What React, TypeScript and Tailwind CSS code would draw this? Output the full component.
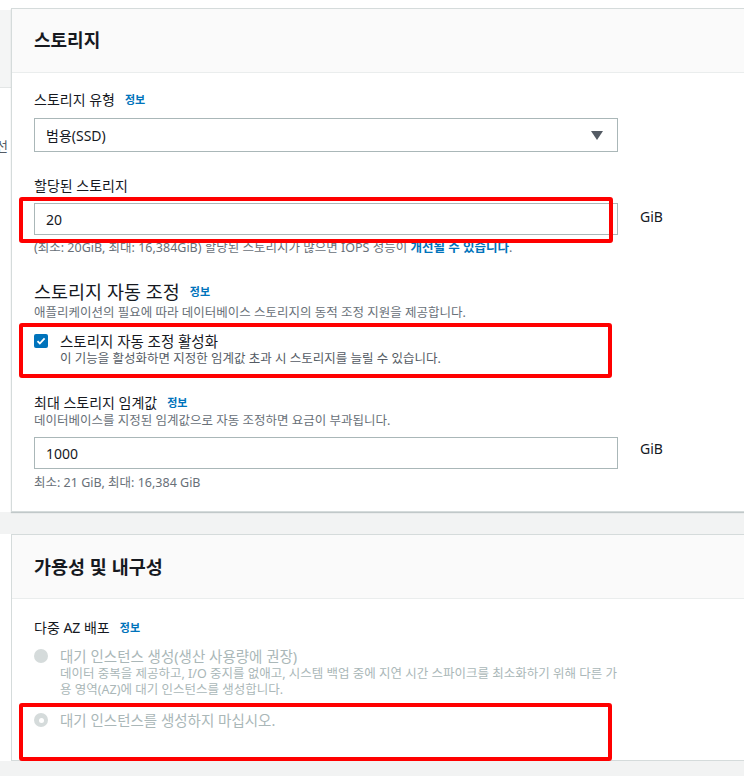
const font = 'font-["Noto_Sans","Noto_Sans_CJK_KR",sans-serif]';

function Info() {
  return <span className="ml-[10px] text-[11px] font-bold text-[#0073bb]">정보</span>;
}

function RedBox({ className }: { className: string }) {
  return <div className={`pointer-events-none absolute rounded-[3px] border-4 border-[#ff0000] ${className}`} />;
}

function LeftStrip({ withHeader }: { withHeader?: boolean }) {
  return (
    <div className="w-[11px] shrink-0 overflow-hidden bg-white">
      {withHeader && (
        <>
          <div className="mt-[2px] h-[78px] border-b border-[#e3e6e6] bg-[#f4f5f5]" />
          <div className="mt-[50px] flex h-[16px] justify-end overflow-hidden whitespace-nowrap text-[13px] leading-[16px] text-[#545b64]">
            <span className="mr-[3px]">선</span>
          </div>
        </>
      )}
    </div>
  );
}

export default function App() {
  return (
    <div className={`${font} h-[776px] w-[744px] overflow-hidden bg-[#f2f3f3] text-[#16191f]`}>
      <div className="h-[8px] bg-white" />
      <div className="flex">
        <LeftStrip withHeader />
        {/* Storage card */}
        <div className="flex-1 border-l border-t border-b border-[#d5dbdb] bg-white shadow-[0_1px_1px_rgba(0,28,36,0.2)]">
          <div className="flex h-[64px] items-center border-b border-[#eaeded] bg-[#fafafa] pl-[22px]">
            <h2 className="text-[18px] font-bold">스토리지</h2>
          </div>
          <div className="pb-[20px] pl-[22px] pt-[17px]">
            <div className="flex items-center text-[14px] leading-[20px]">
              스토리지 유형 <Info />
            </div>
            <div className="mt-[8px] flex h-[34px] w-[584px] items-center justify-between border border-[#aab7b8] bg-white pl-[11px] pr-[14px] text-[14px]">
              <span>범용(SSD)</span>
              <svg width="12" height="9" viewBox="0 0 12 9">
                <path d="M0 0h12L6 9z" fill="#545b64" />
              </svg>
            </div>

            <div className="mt-[24px] text-[14px] leading-[20px]">할당된 스토리지</div>
            <div className="mt-[7px] flex items-start">
              <div className="relative">
                <div className="flex h-[32px] w-[584px] items-center border border-[#aab7b8] pl-[11px] text-[14px]">20</div>
                <RedBox className="-left-[15px] -top-[6px] right-[5px] -bottom-[8px]" />
              </div>
              <span className="ml-[22px] pt-[3px] text-[14px]">GiB</span>
            </div>
            <p className="mt-[5px] text-[12.5px] leading-[16px] text-[#687078]">
              (최소: 20GiB, 최대: 16,384GiB) 할당된 스토리지가 많으면 IOPS 성능이{' '}
              <span className="font-bold text-[#0073bb]">개선될 수 있습니다</span>.
            </p>

            <div className="mt-[24px] flex items-center text-[18.5px] leading-[24px]">
              스토리지 자동 조정 <Info />
            </div>
            <p className="mt-[1px] text-[12.5px] leading-[16px] text-[#687078]">
              애플리케이션의 필요에 따라 데이터베이스 스토리지의 동적 조정 지원을 제공합니다.
            </p>
            <div className="relative mt-[10px] flex w-[584px] items-start">
              <div className="mt-[3px] flex h-[14px] w-[14px] items-center justify-center rounded-[2px] bg-[#0073bb]">
                <svg width="10" height="10" viewBox="0 0 10 10">
                  <path d="M1.5 5.2l2.3 2.3L8.6 2.3" fill="none" stroke="white" strokeWidth="1.8" />
                </svg>
              </div>
              <div className="ml-[12px]">
                <div className="text-[14.5px] leading-[20px]">스토리지 자동 조정 활성화</div>
                <div className="text-[12.5px] leading-[16px] text-[#545b64]">
                  이 기능을 활성화하면 지정한 임계값 초과 시 스토리지를 늘릴 수 있습니다.
                </div>
              </div>
              <RedBox className="-left-[15px] -top-[8px] right-[6px] -bottom-[11px]" />
            </div>

            <div className="mt-[26px] flex items-center text-[14px] leading-[20px]">
              최대 스토리지 임계값 <Info />
            </div>
            <p className="text-[12.5px] leading-[16px] text-[#687078]">
              데이터베이스를 지정된 임계값으로 자동 조정하면 요금이 부과됩니다.
            </p>
            <div className="mt-[8px] flex items-start">
              <div className="flex h-[32px] w-[584px] items-center border border-[#aab7b8] pl-[11px] text-[14px]">1000</div>
              <span className="ml-[22px] pt-[1px] text-[14px]">GiB</span>
            </div>
            <p className="mt-[6px] text-[12.5px] leading-[16px] text-[#687078]">최소: 21 GiB, 최대: 16,384 GiB</p>
          </div>
        </div>
      </div>

      <div className="h-[22px]" />

      <div className="flex">
        <LeftStrip />
        {/* Availability card */}
        <div className="flex-1 border-l border-t border-b border-[#d5dbdb] bg-white">
          <div className="flex h-[64px] items-center border-b border-[#eaeded] bg-[#fafafa] pl-[22px]">
            <h2 className="text-[18.5px] font-bold">가용성 및 내구성</h2>
          </div>
          <div className="pb-[14px] pl-[22px] pt-[19px]">
            <div className="flex items-center text-[14px] leading-[20px]">
              다중 AZ 배포 <Info />
            </div>
            <div className="mt-[8px] flex w-[584px] items-start">
              <div className="mt-[3px] h-[14px] w-[14px] shrink-0 rounded-full bg-[#d5dbdb]" />
              <div className="ml-[12px] text-[#aab7b8]">
                <div className="text-[14.5px] leading-[20px]">대기 인스턴스 생성(생산 사용량에 권장)</div>
                <div className="break-all text-[12.5px] leading-[16px]">
                  데이터 중복을 제공하고, I/O 중지를 없애고, 시스템 백업 중에 지연 시간 스파이크를 최소화하기 위해 다른 가용 영역(AZ)에 대기 인스턴스를 생성합니다.
                </div>
              </div>
            </div>
            <div className="relative mt-[12px] flex h-[36px] w-[584px] items-start">
              <div className="mt-[3px] flex h-[14px] w-[14px] shrink-0 items-center justify-center rounded-full bg-[#d5dbdb]">
                <div className="h-[5px] w-[5px] rounded-full bg-white" />
              </div>
              <div className="ml-[12px] text-[14.5px] leading-[20px] text-[#aab7b8]">대기 인스턴스를 생성하지 마십시오.</div>
              <RedBox className="-left-[15px] -top-[7px] right-[6px] -bottom-[15px]" />
            </div>
          </div>
        </div>
      </div>
    </div>
  );
}
